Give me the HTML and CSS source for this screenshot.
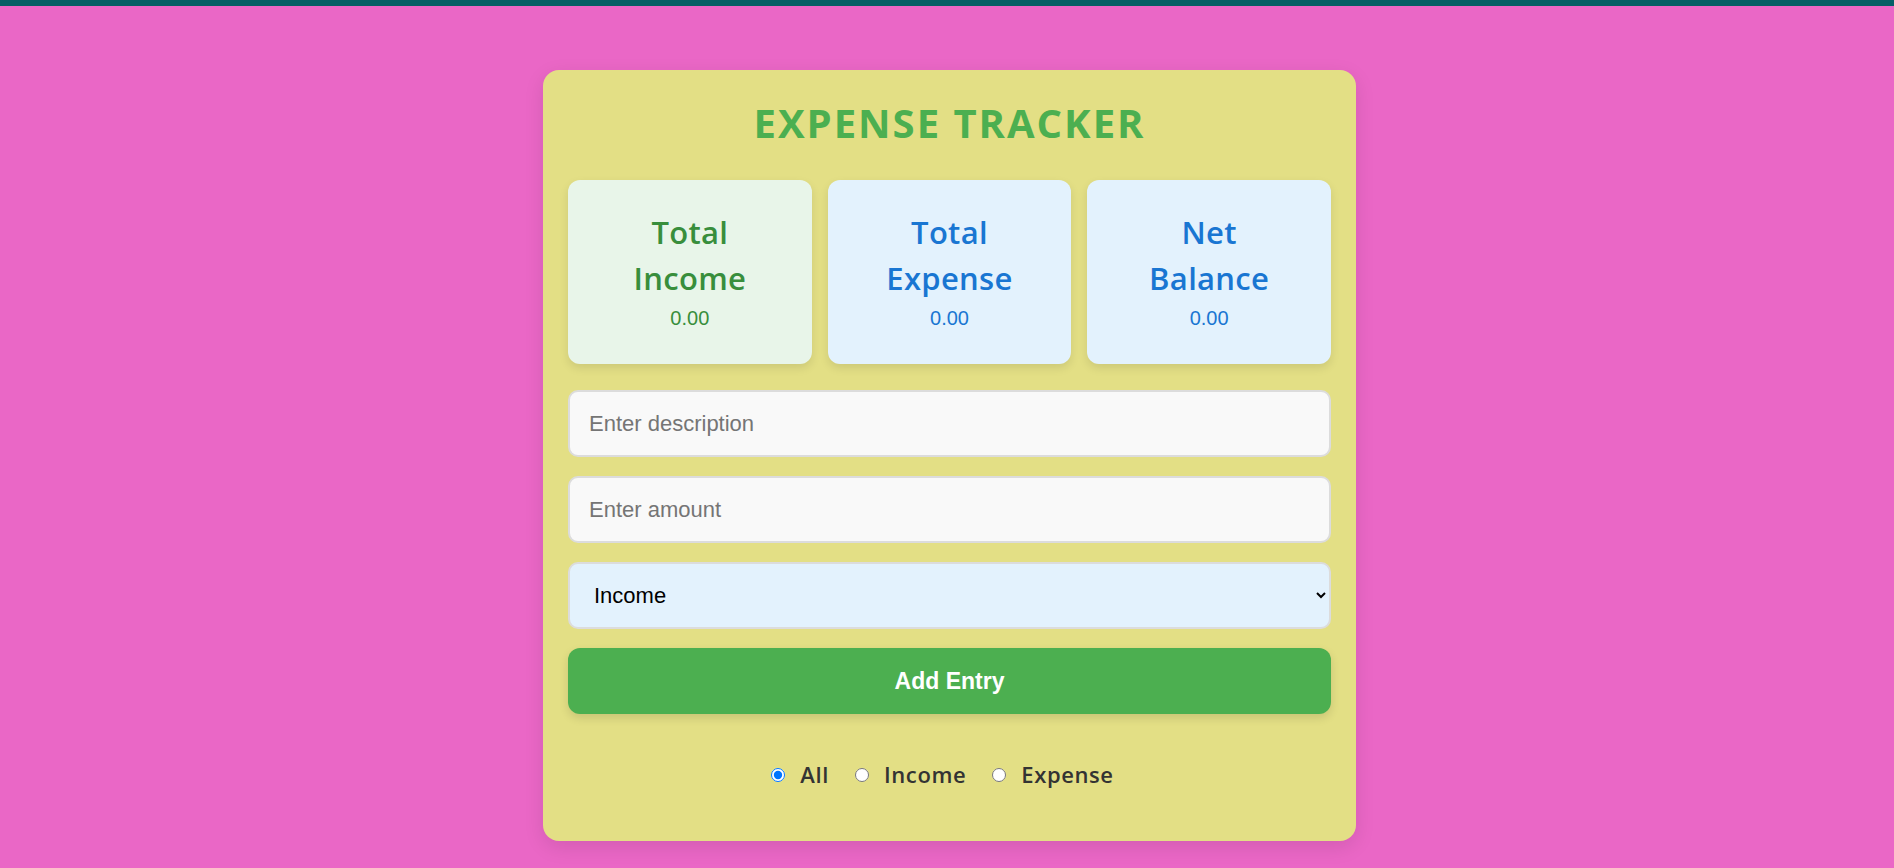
FILE: index.html
```html
<!DOCTYPE html>
<html lang="en">
<head>
<meta charset="utf-8">
<title>Expense Tracker</title>
<link rel="stylesheet" href="styles.css">
</head>
<body>
<div class="topbar"></div>
<main class="page">
  <section class="card">
    <h1 class="title">EXPENSE TRACKER</h1>
    <div class="stats">
      <div class="stat stat-income">
        <h3 class="stat-label">Total Income</h3>
        <p class="stat-value">0.00</p>
      </div>
      <div class="stat stat-expense">
        <h3 class="stat-label">Total Expense</h3>
        <p class="stat-value">0.00</p>
      </div>
      <div class="stat stat-balance">
        <h3 class="stat-label">Net Balance</h3>
        <p class="stat-value">0.00</p>
      </div>
    </div>
    <form class="entry-form">
      <input class="field" type="text" placeholder="Enter description">
      <input class="field" type="number" placeholder="Enter amount">
      <select class="field field-select">
        <option>Income</option>
        <option>Expense</option>
      </select>
      <button class="add-btn" type="button">Add Entry</button>
    </form>
    <div class="filters">
      <label class="filter"><input type="radio" name="filter" checked><span>All</span></label>
      <label class="filter"><input type="radio" name="filter"><span>Income</span></label>
      <label class="filter"><input type="radio" name="filter"><span>Expense</span></label>
    </div>
  </section>
</main>
</body>
</html>
```

FILE: styles.css
```css
* { box-sizing: border-box; }

body {
  margin: 0;
  background: #ea67c6;
  font-family: "Open Sans", "DejaVu Sans", sans-serif;
  min-height: 100vh;
}

.topbar {
  height: 6px;
  background: #055f66;
}

.page {
  display: flex;
  justify-content: center;
  padding: 64px 0 0 5px;
}

.card {
  width: 813px;
  background: #e3df85;
  border-radius: 16px;
  padding: 26px 25px 52px;
  box-shadow: 0 6px 20px rgba(0, 0, 0, 0.1);
}

.title {
  margin: 0;
  text-align: center;
  font-family: "Open Sans", sans-serif;
  font-weight: 700;
  font-size: 40px;
  line-height: 54px;
  letter-spacing: 2px;
  color: #4caf50;
}

.stats {
  display: grid;
  grid-template-columns: repeat(3, 1fr);
  gap: 16px;
  margin-top: 30px;
}

.stat {
  border-radius: 12px;
  padding: 29px 10px 34px;
  text-align: center;
  box-shadow: 0 4px 10px rgba(0, 0, 0, 0.1);
}

.stat-income { background: #e8f5e9; color: #388e3c; }
.stat-expense,
.stat-balance { background: #e3f2fd; color: #1976d2; }

.stat-label {
  margin: 0 auto;
  width: min-content;
  font-family: "Open Sans", sans-serif;
  font-weight: 600;
  font-size: 31px;
  line-height: 46px;
  letter-spacing: 0.3px;
}

.stat-value {
  margin: 6px 0 0;
  font-family: "Liberation Sans", Arial, sans-serif;
  font-size: 20px;
  line-height: 23px;
}

.entry-form {
  display: flex;
  flex-direction: column;
  gap: 19px;
  margin-top: 26px;
}

.field {
  height: 67px;
  width: 100%;
  border: 2px solid #dcdcdc;
  border-radius: 10px;
  background: #f9f9f9;
  padding: 0 19px;
  font-family: "Liberation Sans", Arial, sans-serif;
  font-size: 22px;
  color: #000;
  outline: none;
}

.field::placeholder { color: #757575; }

.field-select {
  background: #e3f2fd;
  padding: 0 12px 0 20px;
}

.add-btn {
  height: 66px;
  border: none;
  border-radius: 12px;
  background: #4caf50;
  color: #fff;
  font-family: "Liberation Sans", Arial, sans-serif;
  font-weight: 700;
  font-size: 23px;
  box-shadow: 0 4px 10px rgba(0, 0, 0, 0.12);
  cursor: pointer;
}

.filters {
  display: flex;
  justify-content: center;
  align-items: center;
  margin-top: 46px;
}

.filter {
  display: flex;
  align-items: center;
  font-family: "Open Sans", sans-serif;
  font-weight: 600;
  font-size: 22px;
  line-height: 29px;
  letter-spacing: 0.6px;
  color: #333;
  margin-right: 20px;
}

.filter input {
  width: 14px;
  height: 14px;
  margin: 0 15px 0 6px;
}
```
